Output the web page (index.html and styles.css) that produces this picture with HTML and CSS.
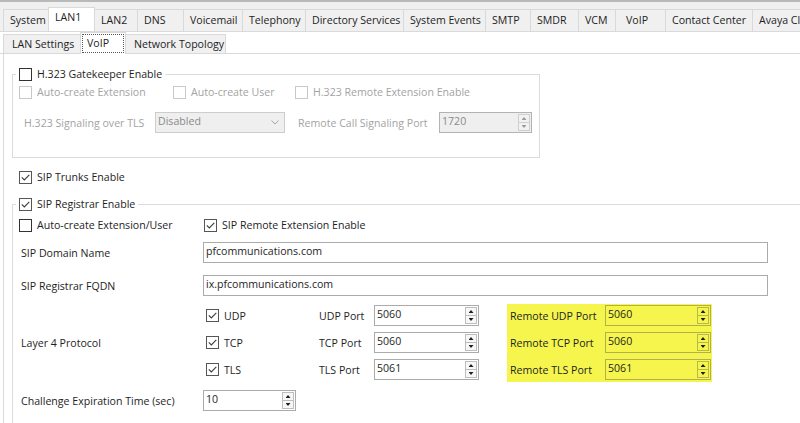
FILE: index.html
```html
<!DOCTYPE html>
<html lang="en">
<head>
<meta charset="utf-8">
<title>VoIP</title>
<link rel="stylesheet" href="styles.css">
</head>
<body>
<div class="tabs-main">
  <div class="tab">System</div>
  <div class="tab active">LAN1</div>
  <div class="tab">LAN2</div>
  <div class="tab">DNS</div>
  <div class="tab">Voicemail</div>
  <div class="tab">Telephony</div>
  <div class="tab">Directory Services</div>
  <div class="tab">System Events</div>
  <div class="tab">SMTP</div>
  <div class="tab">SMDR</div>
  <div class="tab">VCM</div>
  <div class="tab pad-wide">VoIP</div>
  <div class="tab">Contact Center</div>
  <div class="tab">Avaya Cloud Services</div>
</div>
<div class="tabs-sub">
  <div class="stab w-lan">LAN Settings</div>
  <div class="stab active w-voip"><span class="focus">VoIP</span></div>
  <div class="stab w-net">Network Topology</div>
</div>
<div class="page">
  <fieldset class="group h323">
    <legend><span class="chk"><span class="cb"></span>H.323 Gatekeeper Enable</span></legend>
    <div class="h-row2">
      <span class="chk dis"><span class="cb"></span>Auto-create Extension</span>
      <span class="chk dis"><span class="cb"></span>Auto-create User</span>
      <span class="chk dis"><span class="cb"></span>H.323 Remote Extension Enable</span>
    </div>
    <div class="h-row3">
      <span class="lbl dis w-tls">H.323 Signaling over TLS</span>
      <div class="select"><span class="val">Disabled</span><svg class="chev" viewBox="0 0 8 5"><path d="M0.5 0.5 L4 4 L7.5 0.5"/></svg></div>
      <span class="lbl dis w-rcsp">Remote Call Signaling Port</span>
      <div class="spin disabled w-rc"><span class="val">1720</span><span class="sbs"><span class="sb up"></span><span class="sb dn"></span></span></div>
    </div>
  </fieldset>

  <div class="trunks"><span class="chk"><span class="cb on"><svg viewBox="0 0 11 11"><path d="M1.8 5.4 L4.3 7.9 L9.3 2.9"/></svg></span>SIP Trunks Enable</span></div>

  <fieldset class="group sipreg">
    <legend><span class="chk"><span class="cb on"><svg viewBox="0 0 11 11"><path d="M1.8 5.4 L4.3 7.9 L9.3 2.9"/></svg></span>SIP Registrar Enable</span></legend>
    <div class="sr-body">
      <div class="row-a">
        <span class="chk"><span class="cb"></span>Auto-create Extension/User</span>
        <span class="chk"><span class="cb on"><svg viewBox="0 0 11 11"><path d="M1.8 5.4 L4.3 7.9 L9.3 2.9"/></svg></span>SIP Remote Extension Enable</span>
      </div>
      <div class="row field domain">
        <span class="lbl">SIP Domain Name</span>
        <div class="text wide"><span class="val">pfcommunications.com</span></div>
      </div>
      <div class="row field fqdn">
        <span class="lbl">SIP Registrar FQDN</span>
        <div class="text wide"><span class="val">ix.pfcommunications.com</span></div>
      </div>
      <div class="row l4row">
        <span class="lbl">Layer 4 Protocol</span>
        <div class="l4">
          <div class="l4-local">
            <span class="chk proto"><span class="cb on"><svg viewBox="0 0 11 11"><path d="M1.8 5.4 L4.3 7.9 L9.3 2.9"/></svg></span>UDP</span>
            <span class="lbl">UDP Port</span>
            <div class="spin"><span class="val">5060</span><span class="sbs"><span class="sb up"></span><span class="sb dn"></span></span></div>
            <span class="chk proto"><span class="cb on"><svg viewBox="0 0 11 11"><path d="M1.8 5.4 L4.3 7.9 L9.3 2.9"/></svg></span>TCP</span>
            <span class="lbl">TCP Port</span>
            <div class="spin"><span class="val">5060</span><span class="sbs"><span class="sb up"></span><span class="sb dn"></span></span></div>
            <span class="chk proto"><span class="cb on"><svg viewBox="0 0 11 11"><path d="M1.8 5.4 L4.3 7.9 L9.3 2.9"/></svg></span>TLS</span>
            <span class="lbl">TLS Port</span>
            <div class="spin"><span class="val">5061</span><span class="sbs"><span class="sb up"></span><span class="sb dn"></span></span></div>
          </div>
          <div class="l4-remote">
            <span class="lbl">Remote UDP Port</span>
            <div class="spin"><span class="val">5060</span><span class="sbs"><span class="sb up"></span><span class="sb dn"></span></span></div>
            <span class="lbl">Remote TCP Port</span>
            <div class="spin"><span class="val">5060</span><span class="sbs"><span class="sb up"></span><span class="sb dn"></span></span></div>
            <span class="lbl">Remote TLS Port</span>
            <div class="spin"><span class="val">5061</span><span class="sbs"><span class="sb up"></span><span class="sb dn"></span></span></div>
          </div>
        </div>
      </div>
      <div class="row field chal">
        <span class="lbl">Challenge Expiration Time (sec)</span>
        <div class="spin w-chal"><span class="val">10</span><span class="sbs"><span class="sb up"></span><span class="sb dn"></span></span></div>
      </div>
    </div>
  </fieldset>
</div>
</body>
</html>
```

FILE: styles.css
```css
* { box-sizing: border-box; }
html, body { margin: 0; padding: 0; }
body {
  width: 800px;
  height: 423px;
  overflow: hidden;
  background: #fff;
  font-family: "Open Sans", "Noto Sans", sans-serif;
  font-size: 10.6px;
  color: #1e1e1e;
}

/* main tabs */
.tabs-main {
  display: grid;
  grid-template-columns: 45px 46px 43px 46px 59px 63px 98px 82px 45px 48px 37px 50px 87px 1fr;
  align-items: end;
  height: 32px;
  padding-left: 3px;
  background: #f0f0f0;
  border-top: 2px solid #b9b9b9;
  border-bottom: 1px solid #d9d9d9;
  overflow: hidden;
}
.tab {
  height: 22px;
  margin-right: -1px;
  padding-left: 6px;
  line-height: 20px;
  white-space: nowrap;
  overflow: hidden;
  background: #f0f0f0;
  border: 1px solid #d9d9d9;
  border-bottom: none;
}
.tab.active {
  position: relative;
  z-index: 1;
  height: 25px;
  margin-bottom: -1px;
  line-height: 18px;
  background: #fff;
}
.tab.pad-wide { padding-left: 10px; }

/* sub tabs */
.tabs-sub {
  display: flex;
  align-items: flex-end;
  height: 22px;
  padding-left: 3px;
  background: #fff;
  border-bottom: 1px solid #d9d9d9;
}
.stab {
  height: 19px;
  margin-right: -1px;
  padding-left: 8px;
  line-height: 18px;
  white-space: nowrap;
  background: #f0f0f0;
  border: 1px solid #d9d9d9;
  border-bottom: none;
}
.stab.active {
  position: relative;
  z-index: 1;
  height: 22px;
  margin-bottom: -1px;
  padding: 1px 1px 0 1px;
  background: #fff;
}
.stab .focus {
  display: block;
  height: 19px;
  padding-left: 4px;
  line-height: 16px;
  border: 1px dotted #555;
}
.w-lan { width: 78px; }
.w-voip { width: 46px; }
.w-net { width: 101px; }

/* page */
.page {
  margin-left: 3px;
  height: 370px;
  padding-top: 13px;
  border-left: 1px solid #dadada;
  overflow: hidden;
}

.group {
  margin: 0 0 0 8px;
  padding: 0;
  min-width: 0;
  border: 1px solid #dcdcdc;
}
.group legend {
  margin-left: 3px;
  padding: 0 3px;
  height: 14px;
}

/* checkbox */
.chk {
  display: flex;
  align-items: center;
  gap: 5px;
  height: 14px;
  line-height: 14px;
  white-space: nowrap;
}
.cb {
  flex: none;
  display: inline-flex;
  align-items: center;
  justify-content: center;
  width: 13px;
  height: 13px;
  border: 1px solid #333;
  background: #fff;
}
.cb.on { border-color: #555; }
.cb svg {
  width: 11px;
  height: 11px;
  fill: none;
  stroke: #3a3a3a;
  stroke-width: 1.1;
}
.chk.dis { color: #a3a3a3; }
.chk.dis .cb { border-color: #c9c9c9; }

.lbl { white-space: nowrap; }
.lbl.dis { color: #a3a3a3; }

/* H.323 group */
.h323 {
  width: 528px;
  padding-bottom: 24px;
}
.h-row2 {
  display: grid;
  grid-template-columns: 154px 122px auto;
  margin-top: 4px;
  padding-left: 6px;
}
.h-row3 {
  display: flex;
  align-items: center;
  margin-top: 13px;
  padding-left: 11px;
}
.w-tls { width: 131px; }
.w-rcsp { width: 141px; margin-left: 13px; }

.select {
  display: flex;
  align-items: flex-start;
  width: 130px;
  height: 21px;
  padding-left: 2px;
  line-height: 17px;
  color: #8a8a8a;
  background: #efefef;
  border: 1px solid #cdcdcd;
}
.select .val { flex: 1; }
.chev {
  width: 8px;
  height: 5px;
  margin: 7px 5px 0 0;
  fill: none;
  stroke: #a5a5a5;
  stroke-width: 1;
}

/* inputs */
.text, .spin {
  display: flex;
  height: 21px;
  padding-left: 2px;
  line-height: 17px;
  background: #fff;
  border: 1px solid #ababab;
}
.text .val, .spin .val { flex: 1; white-space: nowrap; overflow: hidden; }
.wide { width: 565px; }
.w-rc { width: 93px; }
.w-chal { width: 93px; }
.spin.disabled {
  color: #8a8a8a;
  background: #efefef;
  border-color: #b3b3b3;
}

.sbs {
  display: flex;
  flex-direction: column;
  width: 12px;
  margin: 1px 1px 1px 0;
}
.sb {
  flex: 1;
  display: flex;
  align-items: center;
  justify-content: center;
  border: 1px solid #bdbdbd;
  background: #f7f7f7;
}
.sb.up { border-bottom-width: 0; }
.sb::before {
  content: "";
  width: 5px;
  height: 3px;
  background: #1e1e1e;
}
.sb.up::before { clip-path: polygon(50% 0, 100% 100%, 0 100%); }
.sb.dn::before { clip-path: polygon(0 0, 100% 0, 50% 100%); }
.spin.disabled .sb { background: #f2f2f2; border-color: #cfcfcf; }
.spin.disabled .sb::before { background: #9a9a9a; }

/* SIP trunks */
.trunks {
  margin: 12px 0 0 15px;
}

/* SIP registrar */
.sipreg {
  width: 830px;
  margin-top: 13px;
  padding-bottom: 30px;
}
.sr-body { padding-left: 8px; }
.row-a {
  display: grid;
  grid-template-columns: 185px auto;
  margin: 7px 0 0 -2px;
}
.row {
  display: grid;
  grid-template-columns: 182px auto;
  align-items: center;
}
.domain { margin-top: 10px; }
.fqdn { margin-top: 12px; }
.l4row { margin-top: 8px; }
.chal { margin-top: 8px; }

.l4 { display: flex; align-items: flex-start; }
.l4-local {
  display: grid;
  grid-template-columns: 116px 55px 105px;
  grid-auto-rows: 21px;
  row-gap: 6px;
  align-items: center;
  margin-top: 1px;
}
.proto { padding-left: 3px; }
.l4-remote {
  display: grid;
  grid-template-columns: 95px 106px;
  grid-auto-rows: 21px;
  row-gap: 6px;
  align-items: center;
  margin-left: 28px;
  padding: 1px 1px 2px 3px;
  background: #f5f54e;
}
.l4-remote .spin {
  background: transparent;
  border-color: #b0b04e;
}
.l4-remote .sb {
  background: transparent;
  border-color: #b8b850;
}
```
